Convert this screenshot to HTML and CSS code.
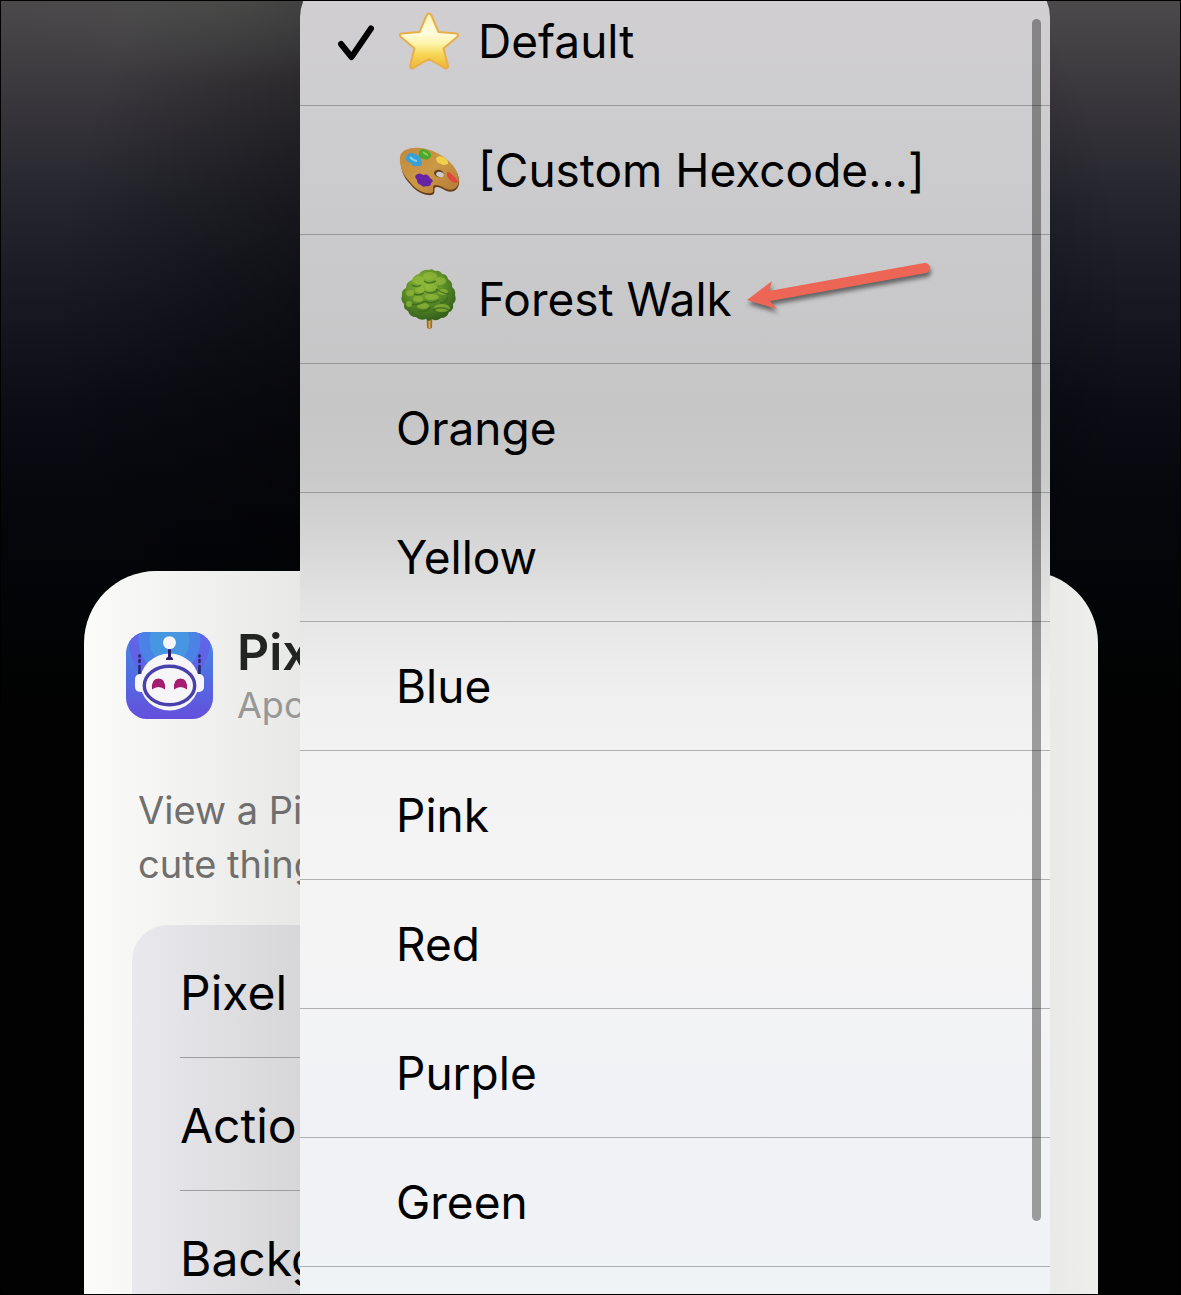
FILE: index.html
```html
<!DOCTYPE html>
<html lang="en">

<head>
  <meta charset="UTF-8" />
  <meta name="viewport" content="width=device-width, initial-scale=1.0" />
  <title>Pixel Pal Widget</title>
  <link rel="stylesheet" href="styles.css">
</head>

<body>
  <div class="screen">
    <!-- Widget card behind the menu -->
    <main class="card">
      <header class="card-header">
        <svg class="app-icon" viewBox="0 0 87 87" aria-hidden="true">
          <defs>
            <linearGradient id="iconBg" x1="0" y1="0" x2="0" y2="1">
              <stop offset="0" stop-color="#4590e3" />
              <stop offset=".45" stop-color="#5070e3" />
              <stop offset="1" stop-color="#644fdc" />
            </linearGradient>
            <linearGradient id="ringFade" x1="0" y1="0" x2="0" y2="1">
              <stop offset=".4" stop-color="#6364ea" />
              <stop offset="1" stop-color="#5d62e2" />
            </linearGradient>
            <clipPath id="iconClip"><rect width="87" height="87" rx="21" /></clipPath>
          </defs>
          <g clip-path="url(#iconClip)">
            <rect width="87" height="87" fill="url(#iconBg)" />
            <ellipse cx="43.500" cy="8" rx="41" ry="46" fill="url(#ringFade)" />
            <ellipse cx="43.500" cy="8" rx="31" ry="34" fill="#4a82e6" />
            <ellipse cx="43.500" cy="8" rx="20" ry="24" fill="#4796e2" />
          </g>
          <g stroke="#26286e" stroke-width="2.600" stroke-linecap="round">
            <path d="M13.500 23.500v1M13.500 28v2M13.500 34v9M73.500 23.500v1M73.500 28v2M73.500 34v9" />
          </g>
          <rect x="9" y="42" width="12" height="18" rx="5" fill="#f6f5f7" />
          <rect x="66" y="42" width="12" height="18" rx="5" fill="#f6f5f7" />
          <ellipse cx="43.500" cy="50" rx="29.500" ry="28.500" fill="#f6f5f7" />
          <path d="M42 16h3v9q2 0 2 3h-7q0-3 2-3z" fill="#2d1c6b" />
          <circle cx="43.500" cy="10.700" r="6.500" fill="#f6f5f7" />
          <ellipse cx="43.500" cy="53.500" rx="25.200" ry="19.200" fill="#f6f5f7" stroke="#4a40ac" stroke-width="3.400" />
          <path d="M26 57.500q-1-11 6.500-11t6.500 11q-3-2.500-6.500-2.500t-6.500 2.500zM48 57.500q-1-11 6.500-11t6.500 11q-3-2.500-6.500-2.500t-6.500 2.500z" fill="#a51d6e" />
        </svg>
        <div>
          <h1 class="card-title">Pixel</h1>
          <p class="card-app">Apollo</p>
        </div>
      </header>

      <p class="card-text">View a Pixel<br>cute things</p>

      <ul class="settings">
        <li>Pixel</li>
        <li>Action</li>
        <li>Background</li>
      </ul>
    </main>

    <!-- Background color menu -->
    <div class="menu" role="menu">
      <button class="menu-item" role="menuitemradio" aria-checked="true">
        <svg class="check" viewBox="0 0 36 36" aria-hidden="true">
          <path d="M3 19L13.500 32L33 3.500" fill="none" stroke="#000" stroke-width="6" stroke-linecap="round" stroke-linejoin="round" />
        </svg>
        <svg class="emoji" viewBox="0 0 70 66" aria-hidden="true">
          <defs>
            <linearGradient id="starFill" x1="0" y1="0" x2="0" y2="1">
              <stop offset="0" stop-color="#fef3b0" />
              <stop offset=".35" stop-color="#fffde0" />
              <stop offset=".55" stop-color="#fdf3a8" />
              <stop offset=".75" stop-color="#f6d653" />
              <stop offset="1" stop-color="#eeb23a" />
            </linearGradient>
          </defs>
          <path d="M32.500 7.500Q35 3.500 37.500 7.500L44.500 24L62.500 25.500Q65.500 26.500 63 29L49.500 40.500L54 58Q54 61.500 50.500 60L35 51L19.500 60Q16 61.500 16 58L20.500 40.500L7 29Q4.500 26.500 7.500 25.500L25.500 24Z" fill="url(#starFill)" stroke="#e9ae4c" stroke-width="2" stroke-linejoin="round" />
        </svg>
        <span>Default</span>
      </button>
      <button class="menu-item" role="menuitemradio" aria-checked="false">
        <svg class="emoji" viewBox="0 0 70 66" aria-hidden="true">
          <defs>
            <linearGradient id="wood" x1="0" y1="0" x2="1" y2="1">
              <stop offset="0" stop-color="#c08a3c" />
              <stop offset=".5" stop-color="#cb9847" />
              <stop offset="1" stop-color="#b57a35" />
            </linearGradient>
          </defs>
          <path d="M7 22C8 14 16 11 27 12C42 13 56 23 62 34C67 43 66 51 60 54C53 57 48 50 43 50C38 50 43 57 38 58C31 59 22 55 16 47C9 40 6 31 7 22Z" fill="#68401e" />
          <path d="M6 20C7 13 16 10 27 11C42 13 56 22 62 33C66 41 66 49 60 52C53 55 48 48 42 48C36 48 42 55 37 56C30 57 22 53 16 45C9 38 5 29 6 20Z" fill="url(#wood)" />
          <path d="M12 20q3-6 9-3q6 1 6 6q3 6-3 6q-6 1-7-3q-6-1-5-6z" fill="#37a0d5" />
          <path d="M16 20q4 4 7 4" fill="none" stroke="#83d0ec" stroke-width="2" />
          <path d="M25 15q2-5 7-2q6 2 5 7q-4 4-7 2q-6-1-5-7z" fill="#4ca72d" />
          <path d="M29 15q4 3 5 3" fill="none" stroke="#8ace54" stroke-width="2" />
          <path d="M42 21q3-3 7-1q6 3 5 7q-5 2-7 0q-5-1-5-6z" fill="#eed04b" />
          <path d="M22 38q4-3 7 0q5-2 7 3q5 3 1 5q0 4-5 3q-3 2-5-1q-4-1-4-5q-3-3-1-5z" fill="#6722a5" />
          <path d="M53 35q4 0 6 4q5 3 4 7q-5 0-8-4q-3-3-2-7z" fill="#df493d" />
          <ellipse cx="45" cy="36.500" rx="5" ry="3.500" transform="rotate(15 45 36.500)" fill="#63401f" />
          <ellipse cx="46" cy="37.500" rx="4" ry="2.500" transform="rotate(15 46 37.500)" fill="#cacacc" />
        </svg>
        <span>[Custom Hexcode...]</span>
      </button>
      <button class="menu-item" role="menuitemradio" aria-checked="false">
        <svg class="emoji" viewBox="0 0 70 66" aria-hidden="true">
          <defs>
            <radialGradient id="leafFill" cx=".42" cy=".3" r=".7">
              <stop offset="0" stop-color="#8fb836" />
              <stop offset=".5" stop-color="#5f8f29" />
              <stop offset="1" stop-color="#35601b" />
            </radialGradient>
          </defs>
          <path d="M32.500 48h6l-.5 14q-2.500 1.500-5 0z" fill="#9a6b25" />
          <path d="M34.500 52h2v10h-2z" fill="#d6ac50" />
          <path d="M35 4q3-2 6 1q5-1 7 3q5 0 6 5q5 3 4 8q4 3 3 8q2 6-2 9q1 6-4 8q-2 6-8 6q-5 4-9 1l-3 2-3-2q-6 2-10-2q-6 0-8-6q-5-2-4-7q-4-4-2-8q-1-6 4-8q0-6 6-8q2-5 7-6q4-5 10-4z" fill="url(#leafFill)" />
          <g fill="#95bd3b" opacity=".65">
            <ellipse cx="36" cy="10" rx="7" ry="4" />
            <ellipse cx="24" cy="14" rx="6" ry="4" />
            <ellipse cx="46" cy="15" rx="6" ry="4" />
            <ellipse cx="37" cy="21" rx="6" ry="4" />
            <ellipse cx="26" cy="24" rx="5" ry="3" />
            <ellipse cx="16" cy="27" rx="4" ry="3" />
            <ellipse cx="49" cy="26" rx="5" ry="3" />
            <ellipse cx="38" cy="31" rx="7" ry="3" />
            <ellipse cx="24" cy="33" rx="5" ry="3" />
            <ellipse cx="29" cy="40" rx="6" ry="3" />
            <ellipse cx="48" cy="42" rx="8" ry="4" />
            <ellipse cx="15" cy="38" rx="3" ry="3" />
          </g>
          <path d="M30 15q5 4 12 0M18 19q5 3 9 0M30 25q6 4 13 0M20 28q5 2 10-1M31 35q7 4 14-1M42 23q5 4 13 5M18 38q7 2 13-3M24 45q8 2 13-4M39 44q8-5 18 1M54 31q-2 6-8 6" fill="none" stroke="#36661a" stroke-width="1.500" opacity=".75" />
        </svg>
        <span>Forest Walk</span>
      </button>
      <button class="menu-item" role="menuitemradio" aria-checked="false"><span>Orange</span></button>
      <button class="menu-item" role="menuitemradio" aria-checked="false"><span>Yellow</span></button>
      <button class="menu-item" role="menuitemradio" aria-checked="false"><span>Blue</span></button>
      <button class="menu-item" role="menuitemradio" aria-checked="false"><span>Pink</span></button>
      <button class="menu-item" role="menuitemradio" aria-checked="false"><span>Red</span></button>
      <button class="menu-item" role="menuitemradio" aria-checked="false"><span>Purple</span></button>
      <button class="menu-item" role="menuitemradio" aria-checked="false"><span>Green</span></button>
      <div class="scroll-thumb"></div>
    </div>

    <!-- Arrow pointing at Forest Walk -->
    <svg class="arrow" viewBox="0 0 200 70" aria-hidden="true">
      <path d="M7 45L32 26L29 36L184 8A5 5 0 0 1 186 18L30 46L37 54Z" fill="#ed6655" />
    </svg>
  </div>
</body>

</html>
```
FILE: styles.css
```css
* {
  box-sizing: border-box;
}

body {
  margin: 0;
  font-family: Inter, "Liberation Sans", sans-serif;
  background-color: black;
}

h1, p, ul {
  margin: 0;
  padding: 0;
}

.screen {
  position: relative;
  display: flex;
  height: 100vh;
  padding: 570px 82px 0 83px;
  border: 1px solid black;
  overflow: hidden;
  background:
    radial-gradient(ellipse 200px 80px at 220px 0, rgba(76, 80, 76, 0.5), transparent),
    radial-gradient(ellipse 540px 600px at 50% 340px, rgba(0, 0, 0, 0.9), transparent),
    linear-gradient(#4c494b, #38363b 100px, #25252e 200px, #171822 300px, #0c0d15 400px, #05060b 520px, #010201 700px);
}

/* Card */
.card {
  flex: 1;
  padding: 60px 48px 0 42px;
  border-radius: 72px 72px 0 0;
  background: linear-gradient(90deg, #fbfbfa, #e8e8e6 216px, #e9e9e7 960px, #eeeeec);
}

.card-header {
  display: flex;
  align-items: center;
  gap: 24px;
  height: 88px;
}

.app-icon {
  width: 87px;
  height: 87px;
}

.card-title {
  font-size: 50px;
  font-weight: 600;
  line-height: 60px;
  color: #222422;
}

.card-app {
  font-size: 36px;
  line-height: 46px;
  color: #979796;
}

.card-text {
  margin: 64px 0 34px 12px;
  font-size: 38px;
  line-height: 54px;
  color: #6f6f6e;
}

.settings {
  margin-left: 6px;
  padding-left: 48px;
  list-style: none;
  border-radius: 36px 36px 0 0;
  background: linear-gradient(90deg, #e9e8ed, #d7d7d9 168px);
}

.settings li {
  height: 133px;
  font-size: 48px;
  line-height: 136px;
  border-bottom: 1px solid #9d9d9f;
}

/* Menu */
.menu {
  position: absolute;
  top: -24px;
  right: 130px;
  bottom: 0;
  left: 299px;
  overflow: hidden;
  border-radius: 40px 40px 0 0;
  background: linear-gradient(#d1cfd1, #cbcbcd 220px, #c6c6c7 430px, #cacaca 500px, #d7d7d7 570px, #e6e6e6 640px, #efefef 710px, #f3f3f3 780px, #f4f4f5 980px, #f1f2f6 1140px, #f0f3f5);
}

.menu-item {
  display: flex;
  align-items: center;
  width: 100%;
  height: 129px;
  padding: 0 38px 0 96px;
  border: 0;
  border-bottom: 1px solid rgba(60, 60, 67, 0.36);
  background: none;
  font: inherit;
  font-size: 46px;
  text-align: left;
  color: black;
}

.check {
  width: 36px;
  height: 36px;
  margin: 4px 22px 0 -58px;
}

.emoji {
  width: 70px;
  height: 66px;
  margin: 0 14px 0 -2px;
}

.scroll-thumb {
  position: absolute;
  top: 42px;
  right: 9px;
  bottom: 73px;
  width: 9px;
  border-radius: 5px;
  background-color: rgba(0, 0, 0, 0.36);
}

.arrow {
  position: absolute;
  top: 254px;
  left: 739px;
  width: 200px;
  height: 70px;
  filter: drop-shadow(1px 4px 2px rgba(0, 0, 0, 0.5));
}
```
